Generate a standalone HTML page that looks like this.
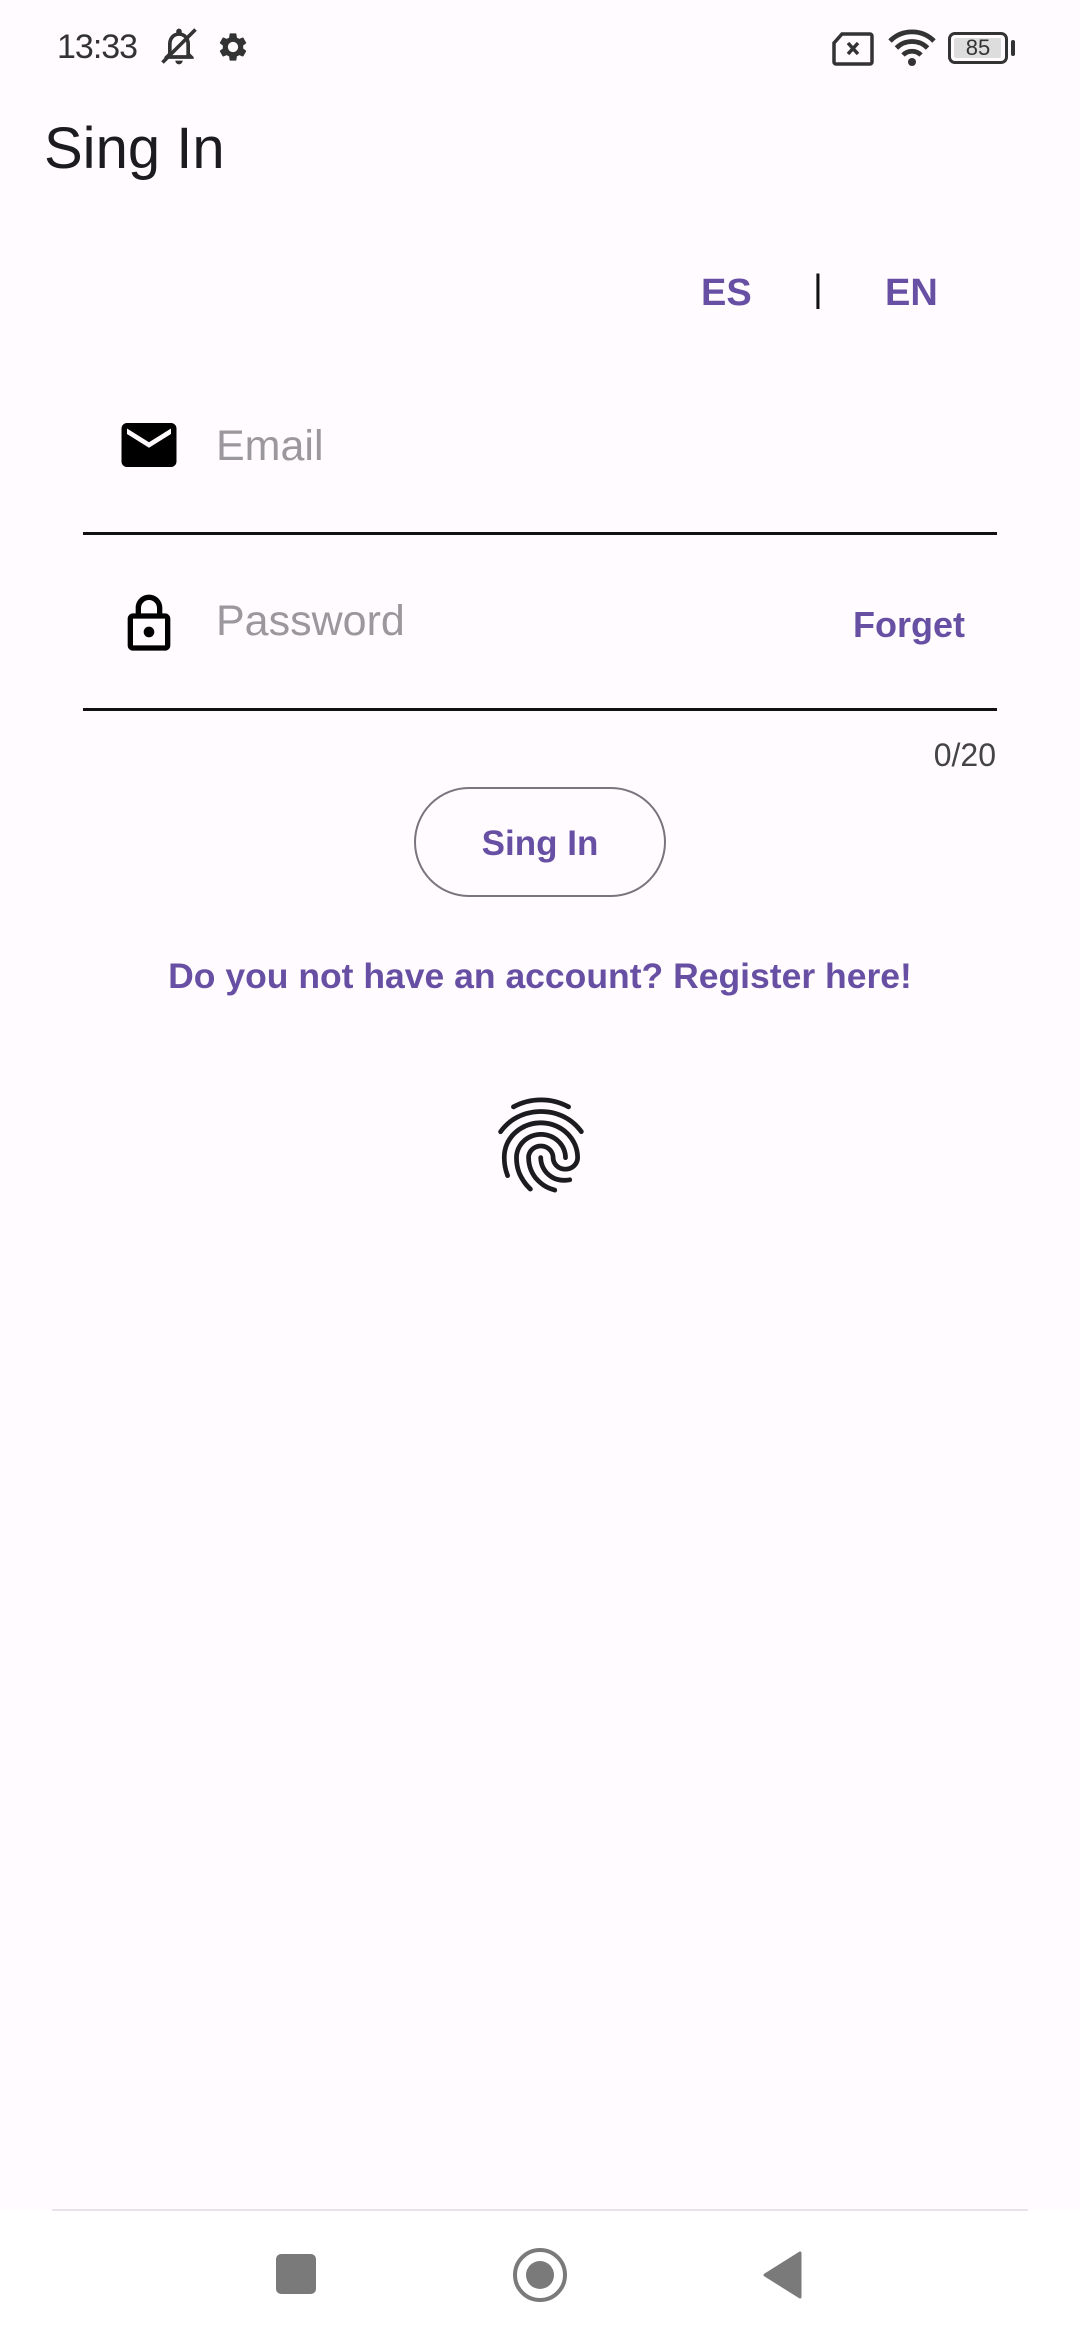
<!DOCTYPE html>
<html><head><meta charset="utf-8"><style>
*{margin:0;padding:0;box-sizing:border-box}
body{width:1080px;height:2340px;background:#fffbfe;font-family:"Liberation Sans",sans-serif;position:relative;overflow:hidden}
.a{position:absolute;white-space:nowrap}
.p{color:#6750a4}
</style></head><body>
<div class="a" style="left:57px;top:28px;font-size:34px;color:#333;letter-spacing:-1px">13:33</div>
<svg class="a" style="left:156px;top:24px" width="46" height="44" viewBox="0 0 24 24"><path d="M12 22c1.1 0 2-.9 2-2h-4c0 1.1.9 2 2 2zm6-6v-5c0-3.07-1.64-5.64-4.5-6.32V4c0-.83-.67-1.5-1.5-1.5s-1.5.67-1.5 1.5v.68C7.630 5.36 6 7.92 6 11v5l-2 2v1h16v-1l-2-2zm-2 1H8v-6c0-2.48 1.51-4.5 4-4.5s4 2.02 4 4.5v6z" fill="#333"/><path d="M3 21L21 3" stroke="#333" stroke-width="2"/></svg>
<svg class="a" style="left:216px;top:30px" width="34" height="34" viewBox="0 0 24 24"><path fill="#333" d="M19.14 12.94c.04-.3.06-.61.06-.94 0-.32-.02-.64-.07-.94l2.03-1.58a.49.49 0 0 0 .12-.61l-1.92-3.32a.488.488 0 0 0-.59-.22l-2.39.96c-.5-.38-1.03-.7-1.62-.94l-.36-2.54a.484.484 0 0 0-.48-.41h-3.84c-.24 0-.43.17-.47.41l-.36 2.54c-.59.24-1.13.57-1.62.94l-2.39-.96c-.22-.08-.47 0-.59.22L2.74 8.87c-.12.21-.08.47.12.61l2.03 1.58c-.05.3-.09.63-.09.94s.02.64.07.94l-2.03 1.58a.49.49 0 0 0-.12.61l1.92 3.32c.12.22.37.29.59.22l2.39-.96c.5.38 1.03.7 1.62.94l.36 2.54c.05.24.24.41.48.41h3.84c.24 0 .44-.17.47-.41l.36-2.54c.59-.24 1.13-.56 1.62-.94l2.39.96c.22.08.47 0 .59-.22l1.92-3.32c.12-.22.07-.47-.12-.61l-2.01-1.58zM12 15.6c-1.98 0-3.6-1.62-3.6-3.6s1.62-3.6 3.6-3.6 3.6 1.62 3.6 3.6-1.62 3.6-3.6 3.6z"/></svg>
<svg class="a" style="left:832px;top:32px" width="42" height="34" viewBox="0 0 42 34"><path d="M10 2h28a2 2 0 0 1 2 2v26a2 2 0 0 1-2 2H4a2 2 0 0 1-2-2V11z" fill="none" stroke="#333" stroke-width="3.5"/><path d="M16 11l10 11M26 11l-10 11" stroke="#333" stroke-width="3.5"/></svg>
<svg class="a" style="left:888px;top:28px" width="48" height="40" viewBox="0 0 24 20"><path d="M1 6.5a15.5 15.5 0 0 1 22 0" fill="none" stroke="#333" stroke-width="2.4"/><path d="M4.2 10a11 11 0 0 1 15.6 0" fill="none" stroke="#333" stroke-width="2.4"/><path d="M7.5 13.5a6.3 6.3 0 0 1 9 0" fill="none" stroke="#333" stroke-width="2.4"/><circle cx="12" cy="17" r="2" fill="#333"/></svg>
<div class="a" style="left:948px;top:32px;width:60px;height:32px;border:3px solid #333;border-radius:7px"><div style="position:absolute;left:3px;top:3px;width:47px;height:20px;background:#ddd;border-radius:2px"></div><div style="position:absolute;left:0;top:0;width:54px;text-align:center;font-size:22px;line-height:26px;color:#333">85</div></div>
<div class="a" style="left:1011px;top:40px;width:4px;height:16px;background:#333;border-radius:2px"></div>

<div class="a" style="left:44px;top:115px;font-size:58px;color:#1c1b1f">Sing In</div>

<div class="a p" style="left:701px;top:272px;font-size:38px;font-weight:bold">ES</div>
<div class="a" style="left:813px;top:268px;font-size:38px;color:#111">|</div>
<div class="a p" style="left:885px;top:272px;font-size:38px;font-weight:bold">EN</div>

<svg class="a" style="left:116px;top:412px" width="66" height="66" viewBox="0 0 24 24"><path d="M20 4H4c-1.1 0-1.99.9-1.99 2L2 18c0 1.1.9 2 2 2h16c1.1 0 2-.9 2-2V6c0-1.1-.9-2-2-2zm0 4l-8 5-8-5V6l8 5 8-5v2z"/></svg>
<div class="a" style="left:216px;top:422px;font-size:43px;color:#9a989d">Email</div>
<div class="a" style="left:83px;top:532px;width:914px;height:3px;background:#111"></div>

<svg class="a" style="left:117px;top:592px" width="64" height="64" viewBox="0 0 24 24"><path d="M18 8h-1V6c0-2.76-2.24-5-5-5S7 3.24 7 6v2H6c-1.1 0-2 .9-2 2v10c0 1.1.9 2 2 2h12c1.1 0 2-.9 2-2V10c0-1.1-.9-2-2-2zM9 6c0-1.66 1.34-3 3-3s3 1.34 3 3v2H9V6zm9 14H6V10h12v10zm-6-3c1.1 0 2-.9 2-2s-.9-2-2-2-2 .9-2 2 .9 2 2 2z"/></svg>
<div class="a" style="left:216px;top:597px;font-size:43px;color:#9a989d">Password</div>
<div class="a p" style="left:853px;top:604px;font-size:36px;font-weight:bold">Forget</div>
<div class="a" style="left:83px;top:708px;width:914px;height:3px;background:#111"></div>
<div class="a" style="left:896px;top:737px;width:100px;text-align:right;font-size:32px;color:#444">0/20</div>

<div class="a" style="left:414px;top:787px;width:252px;height:110px;border:2.5px solid #79747e;border-radius:55px;text-align:center;line-height:110px;font-size:35px;font-weight:bold;color:#6750a4">Sing In</div>

<div class="a p" style="left:0;width:1080px;text-align:center;top:956px;font-size:35.5px;font-weight:bold">Do you not have an account? Register here!</div>

<svg class="a" style="left:484px;top:1088px" width="114" height="114" viewBox="0 0 24 24"><path fill="#1c1b1f" d="M17.81 4.47c-.08 0-.16-.02-.23-.06C15.66 3.42 14 3 12.01 3c-1.98 0-3.86.47-5.57 1.41-.24.13-.54.04-.68-.2-.13-.24-.04-.55.2-.68C7.82 2.52 9.86 2 12.01 2c2.13 0 3.99.47 6.03 1.52.25.13.34.43.21.67-.09.18-.26.28-.44.28zM3.5 9.72c-.1 0-.2-.03-.29-.09-.23-.16-.28-.47-.12-.7.99-1.4 2.25-2.5 3.75-3.27C9.98 4.04 14 4.03 17.15 5.65c1.5.77 2.76 1.86 3.75 3.25.16.22.11.54-.12.7-.23.16-.54.11-.7-.12-.9-1.26-2.04-2.25-3.39-2.94-2.87-1.47-6.54-1.47-9.4.01-1.36.7-2.5 1.7-3.4 2.96-.08.14-.23.21-.39.21zm6.25 12.07c-.13 0-.26-.05-.35-.15-.87-.87-1.34-1.43-2.01-2.64-.69-1.23-1.05-2.73-1.05-4.34 0-2.97 2.54-5.39 5.66-5.39s5.66 2.42 5.66 5.39c0 .28-.22.5-.5.5s-.5-.22-.5-.5c0-2.42-2.09-4.39-4.66-4.39-2.57 0-4.66 1.97-4.66 4.39 0 1.44.32 2.77.93 3.85.64 1.15 1.08 1.64 1.85 2.42.19.2.19.51 0 .71-.11.1-.24.15-.37.15zm7.17-1.85c-1.19 0-2.24-.3-3.1-.89-1.49-1.01-2.38-2.65-2.38-4.39 0-.28.22-.5.5-.5s.5.22.5.5c0 1.41.72 2.74 1.94 3.56.71.48 1.54.71 2.54.71.24 0 .64-.03 1.04-.1.27-.05.53.13.58.41.05.27-.13.53-.41.58-.57.11-1.07.12-1.21.12zM14.91 22c-.04 0-.09-.01-.13-.02-1.59-.44-2.63-1.03-3.72-2.1-1.4-1.39-2.17-3.24-2.17-5.22 0-1.62 1.38-2.94 3.08-2.94 1.7 0 3.08 1.32 3.08 2.94 0 1.07.93 1.94 2.08 1.94s2.08-.87 2.08-1.94c0-3.77-3.25-6.83-7.25-6.83-2.84 0-5.44 1.58-6.61 4.03-.39.81-.59 1.76-.59 2.8 0 .78.07 2.01.67 3.61.1.26-.03.55-.29.64-.26.1-.55-.04-.64-.29-.49-1.31-.73-2.61-.73-3.96 0-1.2.23-2.29.68-3.24 1.33-2.79 4.28-4.6 7.51-4.6 4.55 0 8.25 3.51 8.25 7.83 0 1.62-1.38 2.94-3.08 2.94s-3.08-1.32-3.08-2.94c0-1.07-.93-1.94-2.08-1.94s-2.08.87-2.08 1.94c0 1.71.66 3.31 1.87 4.51.95.94 1.86 1.46 3.27 1.85.27.07.42.35.35.61-.05.23-.26.38-.47.38z"/></svg>

<div class="a" style="left:0;top:2210px;width:1080px;height:130px;background:#fff"></div>
<div class="a" style="left:52px;top:2209px;width:976px;height:2px;background:#e6e4e8"></div>
<div class="a" style="left:276px;top:2254px;width:40px;height:40px;background:#7a7a7a;border-radius:5px"></div>
<div class="a" style="left:513px;top:2248px;width:54px;height:54px;border:4px solid #7a7a7a;border-radius:50%"></div>
<div class="a" style="left:526px;top:2261px;width:28px;height:28px;background:#7a7a7a;border-radius:50%"></div>
<svg class="a" style="left:762px;top:2250px" width="42" height="50" viewBox="0 0 42 50"><path d="M38 3v44L3 25z" fill="#7a7a7a" stroke="#7a7a7a" stroke-width="3" stroke-linejoin="round"/></svg>
</body></html>
